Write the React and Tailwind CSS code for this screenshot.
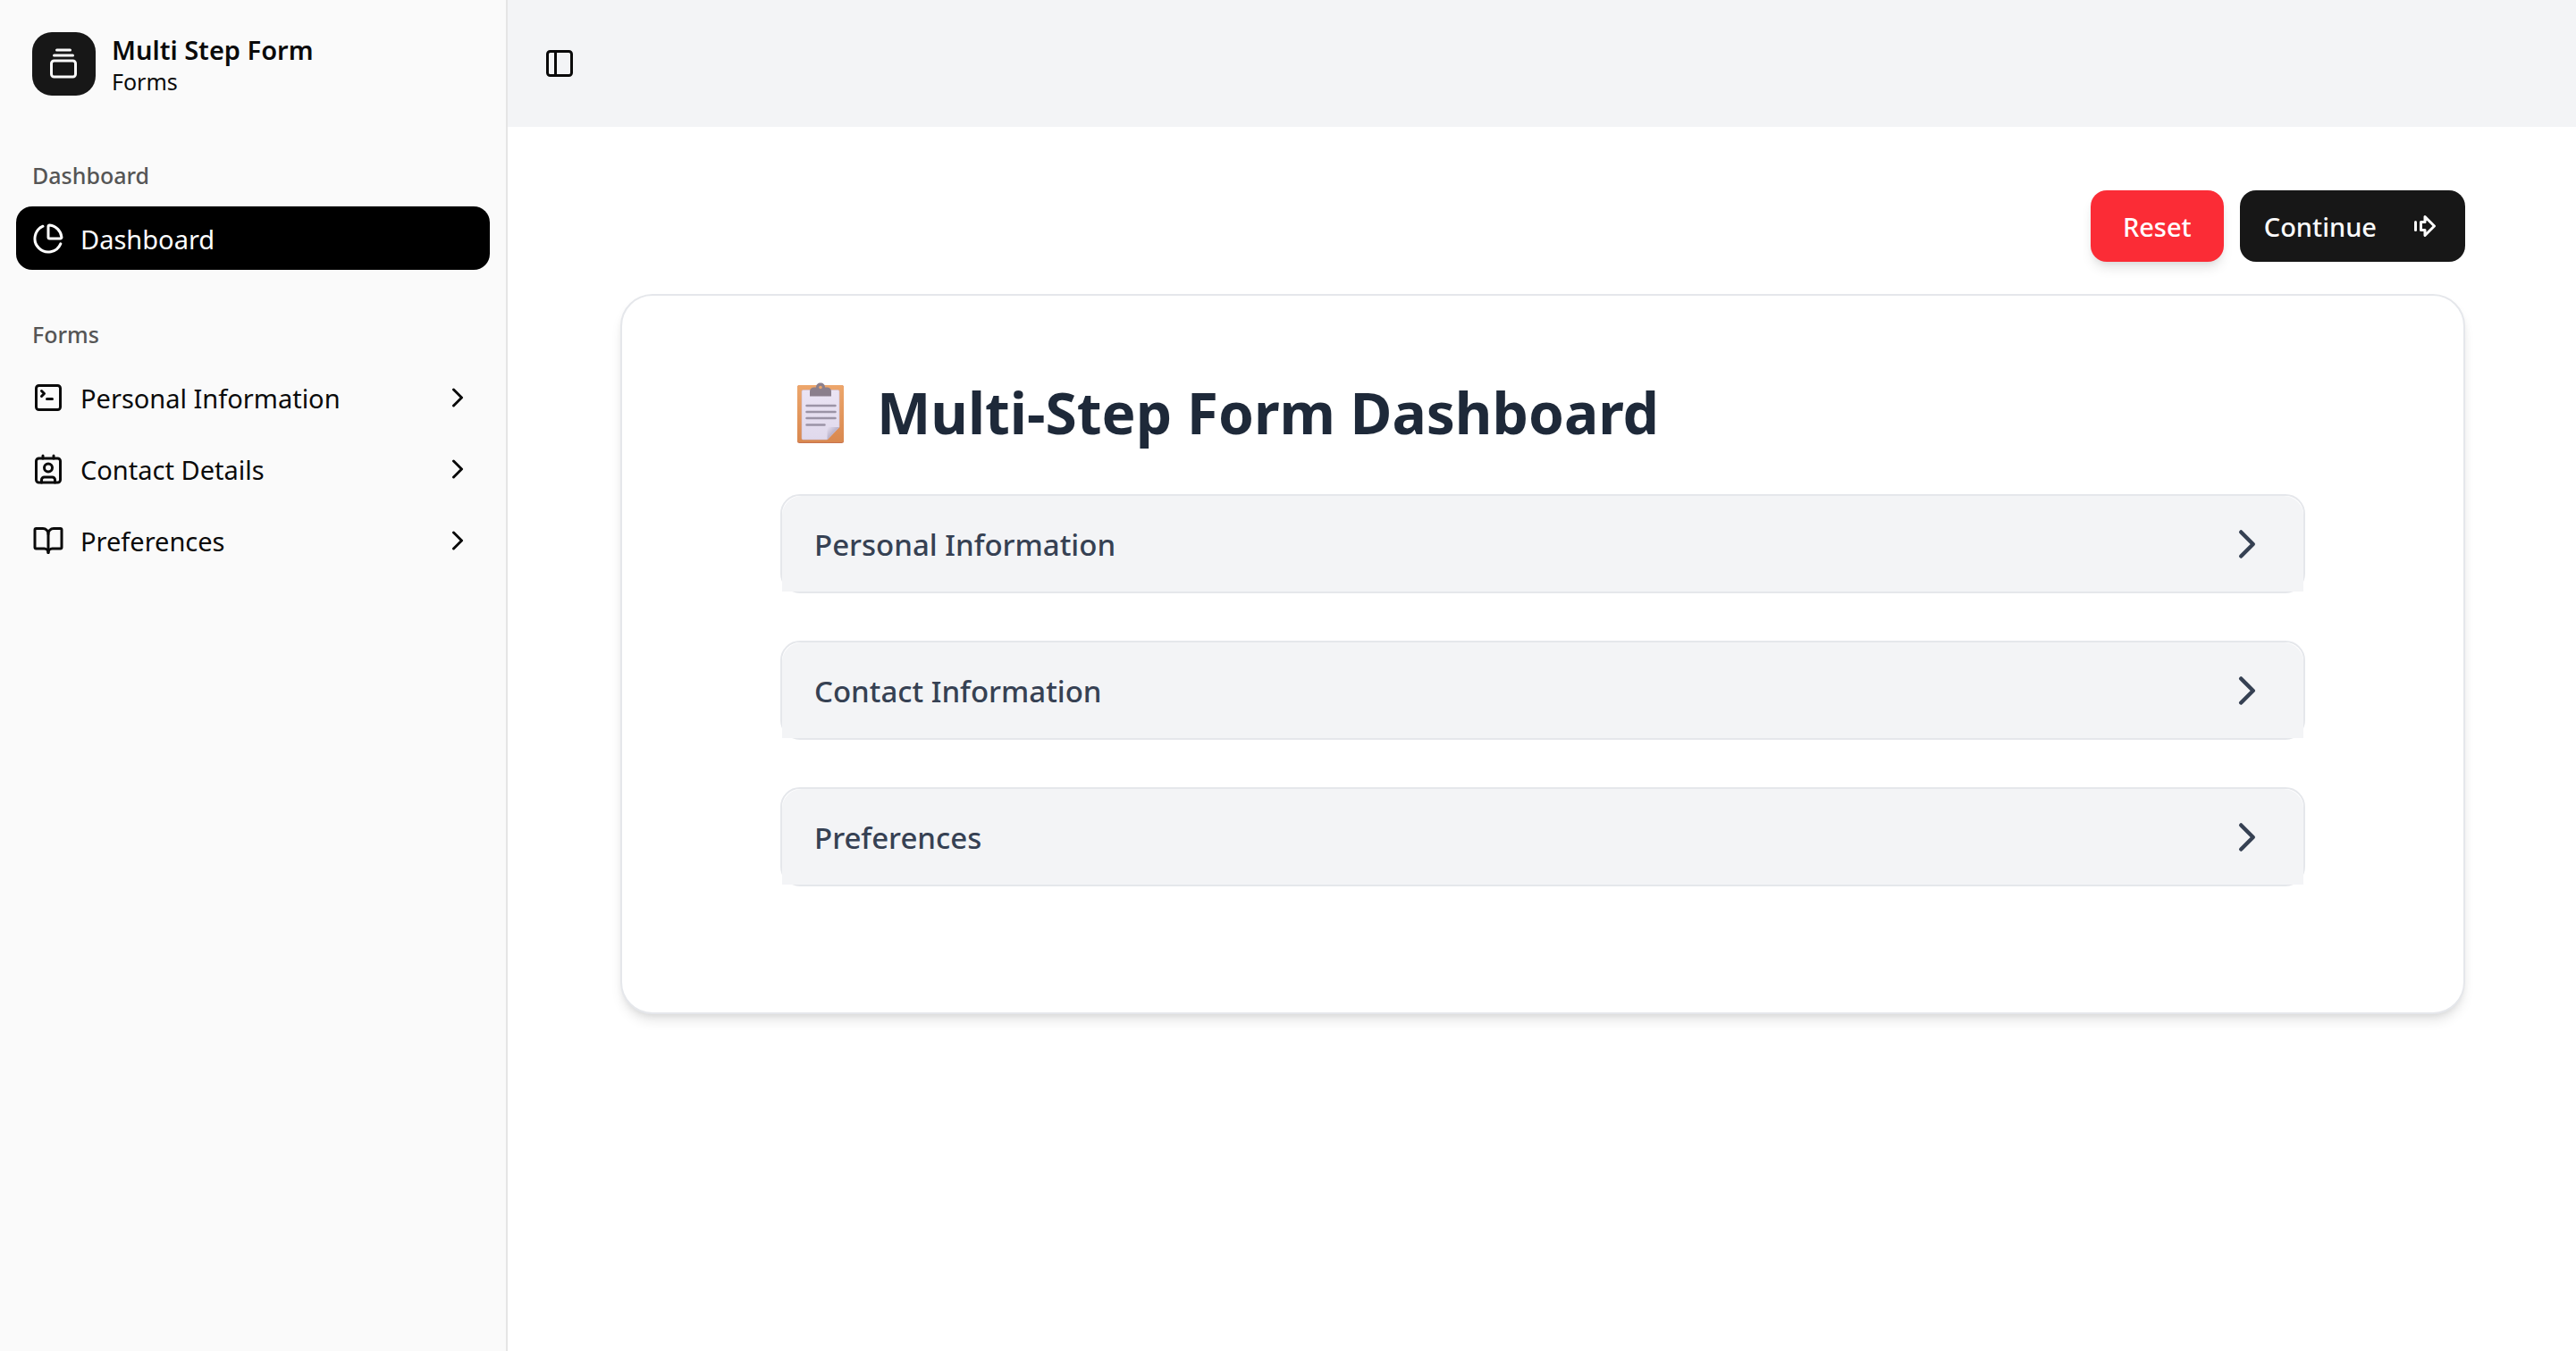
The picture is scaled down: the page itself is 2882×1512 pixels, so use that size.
import { PanelLeft, GalleryVerticalEnd, ChartPie, SquareTerminal, BookOpen, ChevronRight } from "lucide-react";

const FONT = "font-['Segoe_UI','Noto_Sans','Open_Sans',sans-serif]";

function Label({ children }) {
  return <span className="pt-[2px]">{children}</span>;
}

function GroupLabel({ children }) {
  return (
    <h2 className="flex h-[71px] items-center px-[18px] text-[25px] font-medium text-[#555555]">
      <Label>{children}</Label>
    </h2>
  );
}

function ContactBadge({ className }) {
  return (
    <svg viewBox="0 0 24 24" className={className} fill="none" stroke="currentColor" strokeWidth="2" strokeLinecap="round" strokeLinejoin="round">
      <path d="M16 2v2" />
      <path d="M7 22v-2a2 2 0 0 1 2-2h6a2 2 0 0 1 2 2v2" />
      <path d="M8 2v2" />
      <circle cx="12" cy="11" r="3" />
      <rect x="3" y="4" width="18" height="18" rx="2" />
    </svg>
  );
}

function BigArrow({ className }) {
  return (
    <svg viewBox="0 0 24 24" className={className} fill="none" stroke="currentColor" strokeWidth="2" strokeLinecap="round" strokeLinejoin="round">
      <path d="M5 9v6" />
      <path d="M9 9h3V5l7 7-7 7v-4H9V9z" />
    </svg>
  );
}

function Clipboard({ className }) {
  return (
    <svg viewBox="0 0 54 68" className={className} aria-hidden="true">
      <defs>
        <linearGradient id="board" x1="0" y1="0" x2="0" y2="1">
          <stop offset="0" stopColor="#eda66b" />
          <stop offset="1" stopColor="#d9884f" />
        </linearGradient>
        <linearGradient id="paper" x1="0" y1="0" x2="0" y2="1">
          <stop offset="0" stopColor="#ebe4f4" />
          <stop offset="1" stopColor="#e0d9ec" />
        </linearGradient>
        <linearGradient id="fold" x1="0" y1="0" x2="1" y2="1">
          <stop offset="0" stopColor="#e6e0f0" />
          <stop offset="0.5" stopColor="#b9b1c9" />
        </linearGradient>
      </defs>
      <rect x="1" y="3" width="52" height="65" rx="2.5" fill="#c7734f" />
      <rect x="1" y="3" width="52" height="64" rx="2.5" fill="url(#board)" />
      <path d="M7.5 8.5h39a1.500 1.500 0 0 1 1.500 1.500v40L34.500 64H7.500A1.500 1.500 0 0 1 6 62.500V10a1.500 1.500 0 0 1 1.500-1.500z" fill="url(#paper)" stroke="#cfc0d4" strokeWidth="0.6" />
      <path d="M34.500 50H48L34.500 64z" fill="url(#fold)" />
      <path d="M15 15.500V10c0-3 2-4.500 5-4.500h2C22 2.500 24 .5 27 .5s5 2 5 5h2c3 0 5 1.500 5 4.500v5.500z" fill="#8b7f8c" />
      <circle cx="27" cy="5.5" r="1.8" fill="#e9a56d" />
      <path d="M11.500 26h32M11.500 33h32M11.500 40h32M11.500 47.500h20" stroke="#9b93a6" strokeWidth="2.5" strokeLinecap="round" />
    </svg>
  );
}

const links = [
  { label: "Personal Information", Icon: SquareTerminal },
  { label: "Contact Details", Icon: ContactBadge },
  { label: "Preferences", Icon: BookOpen },
];

const sections = ["Personal Information", "Contact Information", "Preferences"];

export default function App() {
  return (
    <div className={`flex min-h-screen bg-white text-[#0a0a0a] ${FONT}`}>
      <aside className="w-[568px] shrink-0 border-r-2 border-[#e5e5e5] bg-[#fafafa] px-[18px]">
        <a href="#" className="flex h-[142px] items-center gap-[18px] px-[18px]">
          <span className="flex size-[71px] items-center rounded-[22px] bg-[#171717] pl-[17px] text-[#fafafa]">
            <GalleryVerticalEnd className="size-[36px]" />
          </span>
          <span className="flex flex-col pt-[2px]">
            <span className="text-[29px] leading-[37px] font-semibold">Multi Step Form</span>
            <span className="text-[25px] leading-[34px]">Forms</span>
          </span>
        </a>
        <nav className="flex flex-col pt-[18px]">
          <GroupLabel>Dashboard</GroupLabel>
          <a href="#" className="flex h-[71px] items-center gap-[18px] rounded-[18px] bg-black px-[18px] text-[29px] text-white">
            <ChartPie className="size-[36px]" />
            <Label>Dashboard</Label>
          </a>
          <div className="pt-[36px]">
            <GroupLabel>Forms</GroupLabel>
            <ul className="flex flex-col gap-[9px]">
              {links.map(({ label, Icon }) => (
                <li key={label}>
                  <button type="button" className="flex h-[71px] w-full items-center gap-[18px] px-[18px] text-[29px]">
                    <Icon className="size-[36px]" />
                    <Label>{label}</Label>
                    <ChevronRight className="ml-auto size-[36px]" />
                  </button>
                </li>
              ))}
            </ul>
          </div>
        </nav>
      </aside>
      <div className="flex min-w-0 flex-1 flex-col">
        <header className="flex h-[142px] items-center bg-gray-100 px-[40px]">
          <button type="button" aria-label="Toggle Sidebar">
            <PanelLeft className="size-[36px]" />
          </button>
        </header>
        <main className="flex flex-col gap-[36px] pt-[71px] pr-[124px] pl-[126px]">
          <div className="flex justify-end gap-[18px]">
            <button type="button" className="flex h-[80px] items-center rounded-[18px] bg-[#fb2c36] px-[36px] text-[29px] font-medium text-white shadow-[0_9px_13px_-2px_rgba(0,0,0,0.1),0_4px_9px_-4px_rgba(0,0,0,0.1)]">
              <Label>Reset</Label>
            </button>
            <button type="button" className="flex h-[80px] items-center gap-[36px] rounded-[18px] bg-[#171717] px-[27px] text-[29px] font-medium text-[#fafafa]">
              <Label>Continue</Label>
              <BigArrow className="size-[36px]" />
            </button>
          </div>
          <section className="rounded-[36px] border-2 border-gray-200 bg-white px-[177px] pt-[88px] pb-[141px] shadow-[0_9px_13px_-2px_rgba(0,0,0,0.1),0_4px_9px_-4px_rgba(0,0,0,0.1)]">
            <h1 className="flex h-[86px] items-center gap-[36px] px-[18px] text-[64px] font-bold text-gray-800">
              <Clipboard className="h-[68px] w-[54px]" />
              Multi-Step Form Dashboard
            </h1>
            <div className="flex flex-col gap-[53px] pt-[48px]">
              {sections.map((s) => (
                <div key={s} className="rounded-[22px] border-2 border-gray-200">
                  <button type="button" className="flex h-[107px] w-full items-center justify-between rounded-t-[22px] bg-gray-100 px-[36px] text-[33px] font-medium text-gray-700">
                    <Label>{s}</Label>
                    <ChevronRight className="size-[54px]" />
                  </button>
                </div>
              ))}
            </div>
          </section>
        </main>
      </div>
    </div>
  );
}
